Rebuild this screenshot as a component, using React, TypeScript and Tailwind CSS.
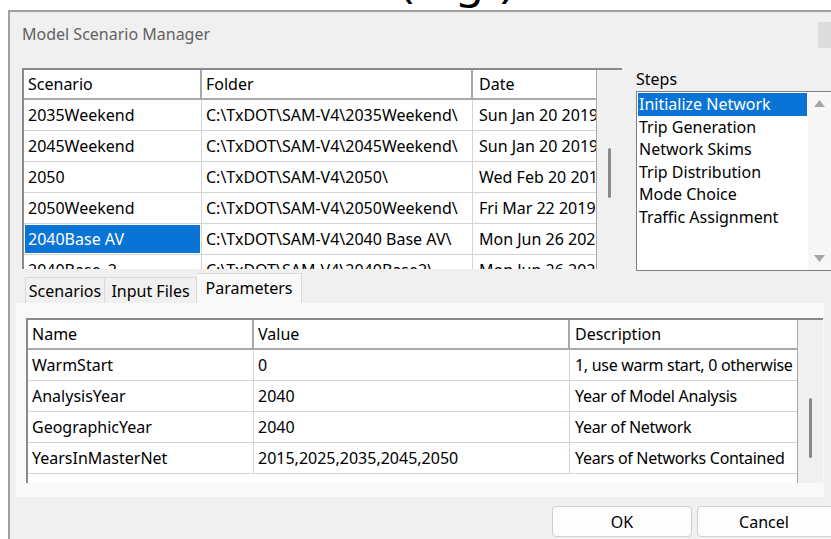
import React from "react";

type Scenario = { name: string; folder: string; date: string };

const scenarios: Scenario[] = [
  { name: "2035Weekend", folder: "C:\\TxDOT\\SAM-V4\\2035Weekend\\", date: "Sun Jan 20 2019" },
  { name: "2045Weekend", folder: "C:\\TxDOT\\SAM-V4\\2045Weekend\\", date: "Sun Jan 20 2019" },
  { name: "2050", folder: "C:\\TxDOT\\SAM-V4\\2050\\", date: "Wed Feb 20 2019" },
  { name: "2050Weekend", folder: "C:\\TxDOT\\SAM-V4\\2050Weekend\\", date: "Fri Mar 22 2019" },
  { name: "2040Base AV", folder: "C:\\TxDOT\\SAM-V4\\2040 Base AV\\", date: "Mon Jun 26 2023" },
  { name: "2040Base_2", folder: "C:\\TxDOT\\SAM-V4\\2040Base2\\", date: "Mon Jun 26 2023" },
];

const steps = [
  "Initialize Network",
  "Trip Generation",
  "Network Skims",
  "Trip Distribution",
  "Mode Choice",
  "Traffic Assignment",
];

const params = [
  { name: "WarmStart", value: "0", desc: "1, use warm start, 0 otherwise" },
  { name: "AnalysisYear", value: "2040", desc: "Year of Model Analysis" },
  { name: "GeographicYear", value: "2040", desc: "Year of Network" },
  { name: "YearsInMasterNet", value: "2015,2025,2035,2045,2050", desc: "Years of Networks Contained" },
];

function ScenarioTable() {
  return (
    <div className="w-[600px] h-[201px] border-t-2 border-l-2 border-[#8a8a8a] bg-[#f0f0f0] flex overflow-hidden">
      <div className="w-[573px] bg-white border-r border-[#a8a8a8]">
        <div className="flex h-[30px] border-b-2 border-[#a8a8a8]">
          <div className="w-[178px] pl-[4px] border-r-2 border-[#a8a8a8] flex items-center">Scenario</div>
          <div className="w-[271px] pl-[4px] border-r-2 border-[#a8a8a8] flex items-center">Folder</div>
          <div className="flex-1 pl-[6px] flex items-center">Date</div>
        </div>
        {scenarios.map((s, i) => (
          <div key={s.name} className="flex h-[31px] border-b border-[#d4d4d4]">
            <div className="w-[178px] border-r border-[#d4d4d4] p-[1px]">
              <div
                className={
                  "h-full pl-[3px] flex items-center whitespace-nowrap overflow-hidden " +
                  (i === 4 ? "bg-[#0a74d6] text-white" : "")
                }
              >
                {s.name}
              </div>
            </div>
            <div className="w-[271px] pl-[4px] border-r border-[#d4d4d4] flex items-center whitespace-nowrap overflow-hidden">
              {s.folder}
            </div>
            <div className="flex-1 pl-[6px] flex items-center whitespace-nowrap overflow-hidden">{s.date}</div>
          </div>
        ))}
      </div>
      <div className="flex-1 flex justify-center pt-[78px]">
        <div className="w-[3px] h-[50px] bg-[#8a8a8a] rounded-full" />
      </div>
    </div>
  );
}

function StepsList() {
  return (
    <div className="flex-1 flex flex-col">
      <div className="h-[23px] leading-[20px] pt-[1px]">Steps</div>
      <div className="h-[180px] border border-r-0 border-[#7f7f7f] bg-white flex">
        <div className="w-[171px] p-[1px] leading-[22.6px]">
          {steps.map((s, i) => (
            <div
              key={s}
              className={"pl-[1px] whitespace-nowrap " + (i === 0 ? "bg-[#0a74d6] text-white" : "")}
            >
              {s}
            </div>
          ))}
        </div>
        <div className="flex-1 bg-[#f7f7f7] flex flex-col items-center justify-between py-[8px]">
          <svg width="11" height="7" viewBox="0 0 11 7">
            <path d="M5.5 0 L11 7 L0 7 Z" fill="#a6a6a6" />
          </svg>
          <svg width="11" height="7" viewBox="0 0 11 7">
            <path d="M0 0 L11 0 L5.5 7 Z" fill="#a6a6a6" />
          </svg>
        </div>
      </div>
    </div>
  );
}

function ParamsTable() {
  return (
    <div className="w-[797px] h-[165px] border-t-2 border-l-2 border-[#8a8a8a] bg-[#f0f0f0] flex overflow-hidden">
      <div className="w-[770px] bg-white border-r border-[#a8a8a8]">
        <div className="flex h-[30px] border-b-2 border-[#a8a8a8]">
          <div className="w-[226px] pl-[4px] border-r-2 border-[#a8a8a8] flex items-center">Name</div>
          <div className="w-[316px] pl-[4px] border-r-2 border-[#a8a8a8] flex items-center">Value</div>
          <div className="flex-1 pl-[5px] flex items-center">Description</div>
        </div>
        {params.map((p) => (
          <div key={p.name} className="flex h-[31px] border-b border-[#d4d4d4]">
            <div className="w-[226px] pl-[4px] border-r border-[#d4d4d4] flex items-center">{p.name}</div>
            <div className="w-[316px] pl-[4px] border-r border-[#d4d4d4] flex items-center">{p.value}</div>
            <div className="flex-1 pl-[5px] flex items-center whitespace-nowrap overflow-hidden tracking-[-0.3px]">
              {p.desc}
            </div>
          </div>
        ))}
      </div>
      <div className="flex-1 flex justify-center pt-[78px]">
        <div className="w-[3px] h-[60px] bg-[#8a8a8a] rounded-full" />
      </div>
    </div>
  );
}

export default function App() {
  return (
    <div className="w-[831px] h-[539px] overflow-hidden bg-white flex flex-col font-['Noto_Sans',sans-serif] text-[16px] text-black">
      {/* caption line cut off above the dialog */}
      <div className="h-[10px] shrink-0 overflow-hidden">
        <div className="mt-[-47px] pl-[400px] text-[46px] leading-[52px] whitespace-nowrap tracking-[2px]">(Fig.)</div>
      </div>

      <div className="flex-1 min-h-0 overflow-hidden ml-[8px] border-l-2 border-t-2 border-[#a0a0a0] bg-[#f0f0f0] flex flex-col">
        <div className="h-[56px] shrink-0 flex justify-between items-start">
          <div className="pl-[12px] pt-[12px] leading-[20px] text-[#626262]">Model Scenario Manager</div>
          <div className="mt-[10px] w-[13px] h-[26px] bg-[#dcdcdc]" />
        </div>

        <div className="h-[204px] shrink-0 flex pl-[12px]">
          <ScenarioTable />
          <div className="w-[14px]" />
          <StepsList />
        </div>

        <div className="h-[31px] shrink-0 flex items-end pl-[15px]">
          <div className="w-[80px] h-[26px] bg-[#f0f0f0] border border-b-0 border-[#d9d9d9] flex items-center justify-center">
            Scenarios
          </div>
          <div className="w-[92px] h-[26px] bg-[#f0f0f0] border border-l-0 border-b-0 border-[#d9d9d9] flex items-center justify-center">
            Input Files
          </div>
          <div className="w-[105px] h-[30px] bg-[#f9f9f9] border border-l-0 border-b-0 border-[#d9d9d9] flex items-start pt-[2px] justify-center">
            Parameters
          </div>
        </div>

        <div className="shrink-0 ml-[6px] w-[808px] h-[194px] bg-[#f9f9f9] pl-[10px] pt-[15px]">
          <ParamsTable />
        </div>

        <div className="shrink-0 flex justify-end gap-[5px] pt-[9px] mr-[-10px]">
          <button className="w-[140px] h-[31px] rounded-[4px] border border-[#cfcfcf] bg-[#fdfdfd]">OK</button>
          <button className="w-[144px] h-[31px] rounded-[4px] border border-[#cfcfcf] bg-[#fdfdfd] pr-[10px]">
            Cancel
          </button>
        </div>
      </div>
    </div>
  );
}
